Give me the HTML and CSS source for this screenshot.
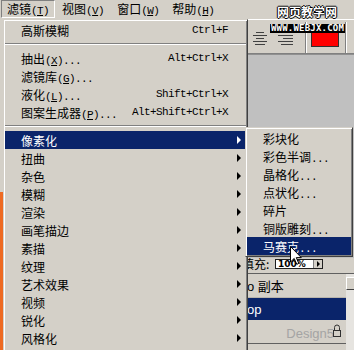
FILE: index.html
```html
<!DOCTYPE html>
<html lang="zh-CN">
<head>
    <meta charset="UTF-8">
    <meta name="viewport" content="width=device-width, initial-scale=1.0">
    <title>滤镜菜单</title>
    <link rel="stylesheet" href="styles.css">
</head>
<body>
<div class="app">
    <!-- 菜单栏 -->
    <div class="menubar">
        <span class="menubar-item active">滤镜<span class="k">(<u>T</u>)</span></span>
        <span class="menubar-item">视图<span class="k">(<u>V</u>)</span></span>
        <span class="menubar-item">窗口<span class="k">(<u>W</u>)</span></span>
        <span class="menubar-item">帮助<span class="k">(<u>H</u>)</span></span>
    </div>

    <!-- 工作区：左边条、文档、右侧面板 -->
    <div class="workspace">
        <div class="strip"></div>
        <div class="doc"></div>
        <div class="panels">
            <!-- 选项栏 -->
            <div class="options">
                <svg class="align-icon" width="14" height="13" viewBox="0 0 14 13">
                    <rect x="3" y="0" width="8" height="1" fill="#404040"/>
                    <rect x="0" y="3" width="14" height="1" fill="#404040"/>
                    <rect x="3" y="6" width="8" height="1" fill="#404040"/>
                    <rect x="0" y="9" width="14" height="1" fill="#404040"/>
                    <rect x="2" y="12" width="10" height="1" fill="#404040"/>
                </svg>
                <svg class="align-icon second" width="15" height="13" viewBox="0 0 15 13">
                    <rect x="5" y="0" width="10" height="1" fill="#404040"/>
                    <rect x="0" y="3" width="15" height="1" fill="#404040"/>
                    <rect x="5" y="6" width="10" height="1" fill="#404040"/>
                    <rect x="0" y="9" width="15" height="1" fill="#404040"/>
                    <rect x="3" y="12" width="12" height="1" fill="#404040"/>
                </svg>
                <span class="sep"></span>
                <span class="swatch"></span>
                <span class="sep last"></span>
            </div>
            <div class="canvas"></div>
            <!-- 图层面板 -->
            <div class="layers">
                <div class="fill-row">
                    <span class="fill-label">填充:</span>
                    <span class="fill-input">100%<span class="fill-btn"></span></span>
                </div>
                <div class="layer-list">
                    <div class="layer-rows">
                        <div class="layer first">o 副本</div>
                        <div class="layer selected">op</div>
                        <div class="layer mark-row">
                            <span class="mark">Design5</span>
                            <svg class="lock" width="8" height="13" viewBox="0 0 8 13">
                                <path d="M1.5 6 V3.5 a2.5 2.5 0 0 1 5 0 V6" fill="none" stroke="#303030" stroke-width="1"/>
                                <rect x="0.5" y="6.5" width="7" height="6" fill="#d4d0c8" stroke="#303030"/>
                            </svg>
                        </div>
                        <div class="layer"></div>
                    </div>
                    <div class="scrollbar"><span class="scroll-up"></span></div>
                </div>
            </div>
        </div>
    </div>

    <!-- 水印 -->
    <div class="wm-title">网页教学网</div>
    <div class="wm-url">WWW.WEBJX.COM</div>

    <!-- 滤镜下拉菜单 -->
    <div class="menu main-menu">
        <div class="item"><span class="label">高斯模糊</span><span class="k key">Ctrl+F</span></div>
        <div class="separator"></div>
        <div class="item"><span class="label">抽出<span class="k">(<u>X</u>)...</span></span><span class="k key">Alt+Ctrl+X</span></div>
        <div class="item"><span class="label">滤镜库<span class="k">(<u>G</u>)...</span></span></div>
        <div class="item"><span class="label">液化<span class="k">(<u>L</u>)...</span></span><span class="k key">Shift+Ctrl+X</span></div>
        <div class="item"><span class="label">图案生成器<span class="k">(<u>P</u>)...</span></span><span class="k key">Alt+Shift+Ctrl+X</span></div>
        <div class="separator"></div>
        <div class="item sub selected"><span class="label">像素化</span><span class="arrow"></span></div>
        <div class="item sub"><span class="label">扭曲</span><span class="arrow"></span></div>
        <div class="item sub"><span class="label">杂色</span><span class="arrow"></span></div>
        <div class="item sub"><span class="label">模糊</span><span class="arrow"></span></div>
        <div class="item sub"><span class="label">渲染</span><span class="arrow"></span></div>
        <div class="item sub"><span class="label">画笔描边</span><span class="arrow"></span></div>
        <div class="item sub"><span class="label">素描</span><span class="arrow"></span></div>
        <div class="item sub"><span class="label">纹理</span><span class="arrow"></span></div>
        <div class="item sub"><span class="label">艺术效果</span><span class="arrow"></span></div>
        <div class="item sub"><span class="label">视频</span><span class="arrow"></span></div>
        <div class="item sub"><span class="label">锐化</span><span class="arrow"></span></div>
        <div class="item sub"><span class="label">风格化</span><span class="arrow"></span></div>
        <div class="item sub"><span class="label">其它</span><span class="arrow"></span></div>
    </div>

    <!-- 像素化子菜单 -->
    <div class="menu sub-menu">
        <div class="item"><span class="label">彩块化</span></div>
        <div class="item"><span class="label">彩色半调<span class="k">...</span></span></div>
        <div class="item"><span class="label">晶格化<span class="k">...</span></span></div>
        <div class="item"><span class="label">点状化<span class="k">...</span></span></div>
        <div class="item"><span class="label">碎片</span></div>
        <div class="item"><span class="label">铜版雕刻<span class="k">...</span></span></div>
        <div class="item selected"><span class="label">马赛克<span class="k">...</span></span></div>
    </div>

    <!-- 鼠标指针 -->
    <svg class="cursor" width="12" height="19" viewBox="0 0 12 19">
        <path d="M0.5 0.5 V16 L4.2 12.4 L6.8 18.3 L8.8 17.4 L6.3 11.6 H11.3 Z" fill="#fff" stroke="#000" stroke-width="1" stroke-linejoin="miter"/>
    </svg>
</div>
</body>
</html>
```

FILE: styles.css
```css
/* 全局样式 */
body {
    margin: 0;
    font-family: "Noto Sans CJK SC", sans-serif;
    font-size: 12px;
    color: #000;
    background-color: #d4d0c8;
    overflow: hidden;
}

.app {
    position: relative;
    width: 354px;
    height: 350px;
    overflow: hidden;
}

/* 半角字符（类似宋体的等宽英文） */
.k {
    font-family: "Liberation Mono", monospace;
    font-size: 11px;
    letter-spacing: -0.6px;
}

/* 菜单栏 */
.menubar {
    display: flex;
    gap: 1px;
    height: 19px;
    padding-left: 1px;
    background-color: #d4d0c8;
}
.menubar-item {
    height: 18px;
    line-height: 16px;
    padding: 0 5px;
    border: 1px solid transparent;
    box-sizing: border-box;
    white-space: nowrap;
}
.menubar-item.active {
    border-color: #808080 #fff #fff #808080;
}

/* 工作区 */
.workspace {
    display: grid;
    grid-template-columns: 3px 237px 1fr;
    height: 331px;
}
.strip {
    background: linear-gradient(#d4d0c8 0 173px, #ee6a22 173px);
}
.doc {
    background-color: #d4d0c8;
}
.panels {
    display: flex;
    flex-direction: column;
}

/* 选项栏 */
.options {
    display: flex;
    align-items: center;
    height: 33px;
    padding-left: 13px;
    border-top: 1px solid #fff;
    border-bottom: 1px solid #808080;
    background-color: #d4d0c8;
}
.align-icon {
    margin-top: 3px;
}
.align-icon.second {
    margin-left: 11px;
}
.sep {
    align-self: stretch;
    width: 1px;
    margin: 2px 0 0 12px;
    background-color: #808080;
    border-right: 1px solid #fff;
}
.sep.last {
    margin-left: 6px;
}
.swatch {
    width: 26px;
    height: 14px;
    margin: 4px 0 0 4px;
    background-color: #ff0000;
    border: 1px solid #303030;
}

.canvas {
    flex: 1;
    background-color: #c0c0c0;
    border-top: 1px solid #909090;
}

/* 图层面板 */
.layers {
    height: 92px;
    background-color: #d4d0c8;
}
.fill-row {
    display: flex;
    align-items: center;
    height: 15px;
    padding: 0 0 0 2px;
    box-sizing: border-box;
}
.fill-label {
    width: 33px;
    line-height: 12px;
    margin-top: -3px;
}
.fill-input {
    position: relative;
    width: 48px;
    height: 10px;
    margin-top: -4px;
    box-sizing: border-box;
    border: 1px solid #202020;
    background-color: #fff;
    font-family: "DejaVu Sans", sans-serif;
    font-size: 9px;
    font-weight: bold;
    line-height: 8px;
    padding-left: 2px;
}
.fill-btn {
    position: absolute;
    right: 0;
    top: 0;
    width: 8px;
    height: 8px;
    background-color: #d4d0c8;
    border-left: 1px solid #808080;
}
.fill-btn::after {
    content: "";
    position: absolute;
    left: 3px;
    top: 1px;
    border-left: 3px solid #000;
    border-top: 3px solid transparent;
    border-bottom: 3px solid transparent;
}
.layer-list {
    display: flex;
    border-top: 1px solid #606060;
}
.layer-rows {
    width: 106px;
}
.layer {
    display: flex;
    align-items: center;
    height: 23px;
    padding-left: 7px;
    border-bottom: 1px solid #b8b4ac;
    font-family: "Liberation Sans", "Noto Sans CJK SC", sans-serif;
    font-size: 13px;
    white-space: nowrap;
}
.layer.selected {
    height: 22px;
    color: #fff;
    background-color: #0a246a;
    border-bottom: none;
}
.mark-row {
    justify-content: flex-end;
    padding-right: 5px;
    border-bottom: 1px solid #606060;
}
.mark {
    color: #a4a4a4;
    font-size: 13px;
    margin-right: -1px;
    margin-top: 3px;
}
.lock {
    margin-top: -2px;
}
.scrollbar {
    flex: 1;
    height: 80px;
    background-color: #e6e4e0;
    padding-top: 3px;
}
.scroll-up {
    display: block;
    width: 16px;
    height: 13px;
    box-sizing: border-box;
    background-color: #d4d0c8;
    border: 1px solid;
    border-color: #fff #404040 #404040 #fff;
}

/* 水印 */
.wm-title {
    position: absolute;
    left: 277px;
    top: 5px;
    font-size: 12px;
    font-weight: bold;
    line-height: 14px;
    color: #fff;
    text-shadow: 1px 0 #000, -1px 0 #000, 0 1px #000, 0 -1px #000;
}
.wm-url {
    position: absolute;
    left: 270px;
    top: 24px;
    padding: 0 1px;
    background-color: #000;
    color: #fff;
    font-family: "DejaVu Sans Mono", monospace;
    font-size: 9px;
    font-weight: bold;
    line-height: 9px;
    letter-spacing: 0.2px;
}

/* 下拉菜单 */
.menu {
    position: absolute;
    box-sizing: border-box;
    padding: 1px;
    background-color: #d4d0c8;
    border: 1px solid;
    border-color: #d4d0c8 #404040 #404040 #d4d0c8;
    box-shadow: inset 1px 1px #fff, inset -1px -1px #808080;
}
.main-menu {
    left: 3px;
    top: 19px;
    width: 245px;
    height: 340px;
}
.sub-menu {
    left: 245px;
    top: 127px;
    width: 108px;
}
.item {
    display: flex;
    align-items: center;
    height: 18px;
    padding: 0 5px 0 16px;
    white-space: nowrap;
}
.item .label {
    flex: 1;
}
.item .key {
    margin-right: 13px;
}
.item.selected {
    color: #fff;
    background-color: #0a246a;
}
.arrow {
    width: 0;
    height: 0;
    border-left: 4px solid #000;
    border-top: 4px solid transparent;
    border-bottom: 4px solid transparent;
}
.item.selected .arrow {
    border-left-color: #fff;
}
.separator {
    height: 1px;
    margin: 4px 0;
    background-color: #808080;
    border-bottom: 1px solid #fff;
    box-sizing: content-box;
}

/* 鼠标指针 */
.cursor {
    position: absolute;
    left: 290px;
    top: 246px;
}
```
